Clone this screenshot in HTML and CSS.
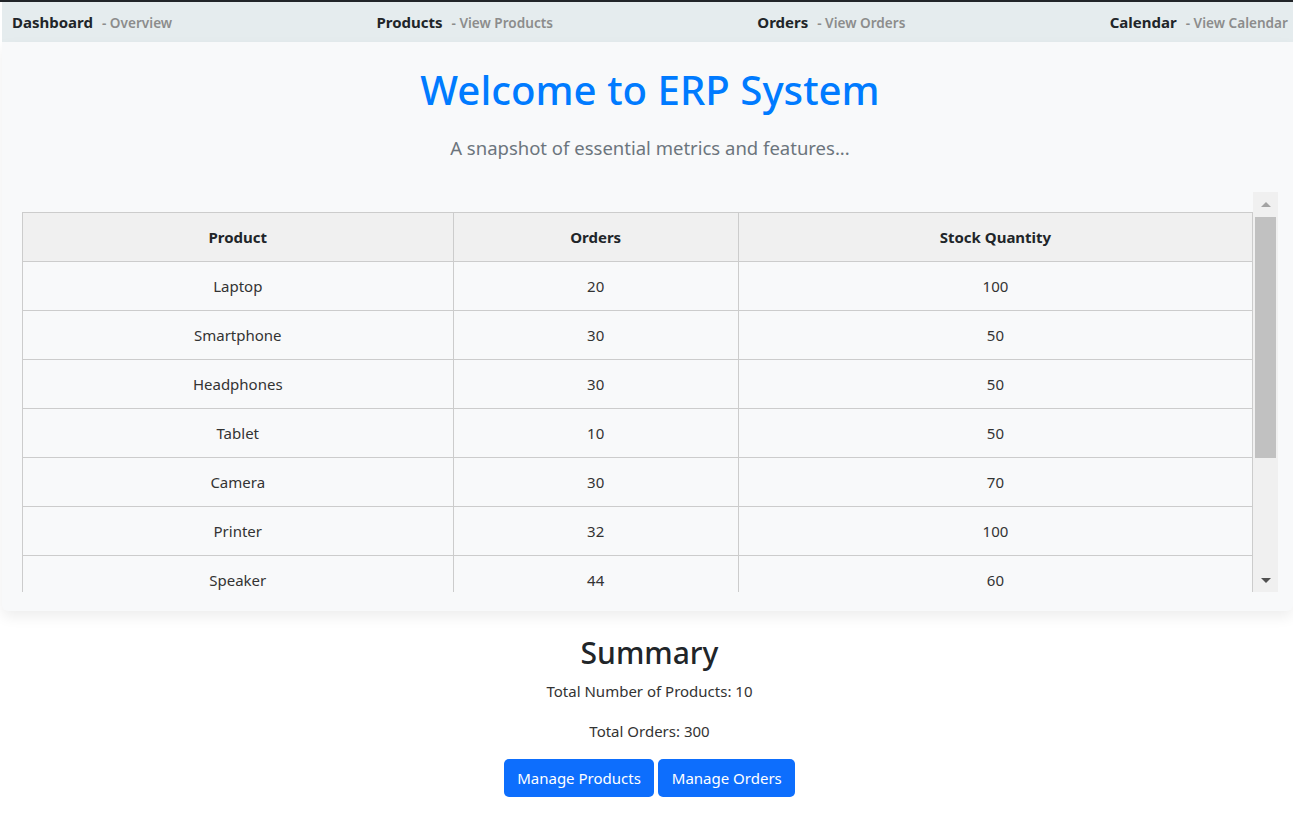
FILE: index.html
```html
<!DOCTYPE html>
<html lang="en">
<head>
<meta charset="utf-8">
<title>ERP System</title>
<link rel="stylesheet" href="styles.css">
</head>
<body>
<div class="page">
  <nav class="topnav">
    <a class="nav-item" href="#"><span class="nav-title">Dashboard</span><span class="nav-sub">- Overview</span></a>
    <a class="nav-item" href="#"><span class="nav-title">Products</span><span class="nav-sub">- View Products</span></a>
    <a class="nav-item" href="#"><span class="nav-title">Orders</span><span class="nav-sub">- View Orders</span></a>
    <a class="nav-item" href="#"><span class="nav-title">Calendar</span><span class="nav-sub">- View Calendar</span></a>
  </nav>
  <main class="panel">
    <h1 class="title">Welcome to ERP System</h1>
    <p class="subtitle">A snapshot of essential metrics and features...</p>
    <div class="table-frame">
      <div class="table-wrap">
        <table class="data-table">
          <thead>
            <tr><th class="col-product">Product</th><th class="col-orders">Orders</th><th>Stock Quantity</th></tr>
          </thead>
          <tbody>
            <tr><td>Laptop</td><td>20</td><td>100</td></tr>
            <tr><td>Smartphone</td><td>30</td><td>50</td></tr>
            <tr><td>Headphones</td><td>30</td><td>50</td></tr>
            <tr><td>Tablet</td><td>10</td><td>50</td></tr>
            <tr><td>Camera</td><td>30</td><td>70</td></tr>
            <tr><td>Printer</td><td>32</td><td>100</td></tr>
            <tr><td>Speaker</td><td>44</td><td>60</td></tr>
          </tbody>
        </table>
      </div>
      <div class="scrollbar" aria-hidden="true">
        <div class="sb-btn"><span class="arrow-up"></span></div>
        <div class="sb-track"><div class="sb-thumb"></div></div>
        <div class="sb-btn"><span class="arrow-down"></span></div>
      </div>
    </div>
  </main>
  <section class="summary">
    <h2 class="summary-title">Summary</h2>
    <p class="summary-line">Total Number of Products: 10</p>
    <p class="summary-line">Total Orders: 300</p>
    <div class="actions">
      <button class="btn">Manage Products</button>
      <button class="btn">Manage Orders</button>
    </div>
  </section>
</div>
</body>
</html>
```

FILE: styles.css
```css
html, body {
  margin: 0;
  padding: 0;
  background: #ffffff;
}

body {
  font-family: "Segoe UI", "Noto Sans", "Open Sans", sans-serif;
  color: #212529;
  border-top: 2px solid #212529;
}

.page {
  padding-left: 2px;
}

.topnav {
  display: flex;
  justify-content: space-between;
  align-items: center;
  height: 40px;
  padding: 0 5px 0 10px;
  background: #e5ecee;
}

.nav-item {
  display: flex;
  align-items: baseline;
  gap: 9px;
  text-decoration: none;
}

.nav-title {
  font-size: 15px;
  font-weight: 700;
  color: #212529;
}

.nav-sub {
  font-size: 13.6px;
  font-weight: 600;
  color: #8c8c8c;
}

.panel {
  background: #f8f9fa;
  padding: 23px 15px 19px 20px;
  box-shadow: 0 6px 14px rgba(0, 0, 0, 0.07);
  border-radius: 0 0 6px 6px;
}

.title {
  margin: 0;
  text-align: center;
  font-size: 40.2px;
  font-weight: 500;
  line-height: 49px;
  color: #007bff;
}

.subtitle {
  margin: 20px 0 30px;
  text-align: center;
  font-size: 18.5px;
  line-height: 28px;
  color: #6c757d;
}

.table-frame {
  display: flex;
  height: 400px;
}

.table-wrap {
  flex: 1;
  overflow: hidden;
}

.scrollbar {
  width: 25px;
  display: flex;
  flex-direction: column;
  background: #f0f0f0;
}

.sb-btn {
  height: 25px;
  display: flex;
  align-items: center;
  justify-content: center;
}

.arrow-up {
  width: 0;
  height: 0;
  border-left: 5px solid transparent;
  border-right: 5px solid transparent;
  border-bottom: 5px solid #a3a3a3;
}

.arrow-down {
  width: 0;
  height: 0;
  border-left: 5px solid transparent;
  border-right: 5px solid transparent;
  border-top: 5px solid #505050;
  margin-top: 2px;
}

.sb-track {
  flex: 1;
  padding: 0 2px;
}

.sb-thumb {
  height: 241px;
  background: #c1c1c1;
}

.data-table {
  width: 100%;
  margin: 20px 0;
  border-collapse: collapse;
  font-size: 15px;
}

.data-table th,
.data-table td {
  border: 1px solid #cccccc;
  height: 48px;
  padding: 0 8px;
  text-align: center;
  vertical-align: middle;
}

.data-table th {
  background: #f0f0f0;
  font-weight: 700;
}

.data-table td {
  color: #333333;
}

.col-product {
  width: 35%;
}

.col-orders {
  width: 23.2%;
}

.summary {
  text-align: center;
  padding-top: 24px;
  padding-left: 4px;
}

.summary-title {
  margin: 0 0 8px;
  font-size: 30px;
  font-weight: 500;
  line-height: 36px;
}

.summary-line {
  margin: 0 0 16px;
  font-size: 15px;
  line-height: 24px;
  color: #333333;
}

.actions {
  display: flex;
  justify-content: center;
  gap: 4px;
}

.btn {
  font-family: inherit;
  font-size: 15px;
  line-height: 24px;
  padding: 7px 13.5px;
  border: 0;
  border-radius: 5px;
  background: #0d6efd;
  color: #ffffff;
}
```
